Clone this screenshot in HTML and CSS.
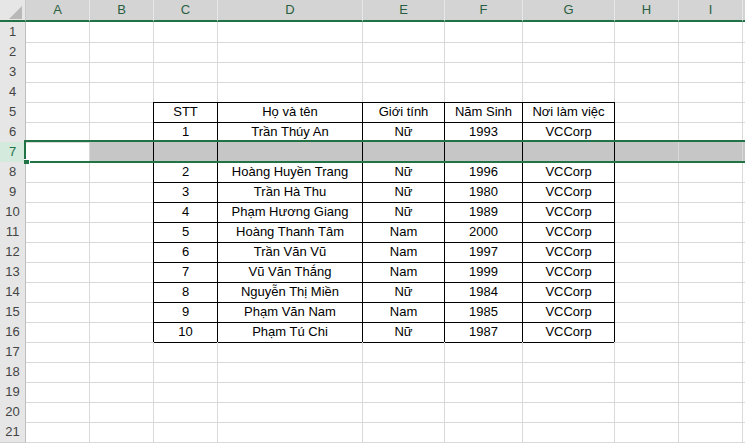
FILE: index.html
```html
<!DOCTYPE html>
<html>
<head>
<meta charset="utf-8">
<link rel="stylesheet" href="styles.css">
</head>
<body>
<div class="sheet">
  <div class="row head">
    <div class="corner"><svg class="tri" width="26" height="20" viewBox="0 0 26 20"><polygon points="9,19 22,6 22,19" fill="#b8b8b8"/></svg></div>
    <div class="ch">A</div><div class="ch">B</div><div class="ch">C</div><div class="ch">D</div><div class="ch">E</div><div class="ch">F</div><div class="ch">G</div><div class="ch">H</div><div class="ch">I</div><div class="ch"></div>
  </div>
  <div class="row"><div class="rh">1</div><div class="c"></div><div class="c"></div><div class="c"></div><div class="c"></div><div class="c"></div><div class="c"></div><div class="c"></div><div class="c"></div><div class="c"></div><div class="c"></div></div>
  <div class="row"><div class="rh">2</div><div class="c"></div><div class="c"></div><div class="c"></div><div class="c"></div><div class="c"></div><div class="c"></div><div class="c"></div><div class="c"></div><div class="c"></div><div class="c"></div></div>
  <div class="row"><div class="rh">3</div><div class="c"></div><div class="c"></div><div class="c"></div><div class="c"></div><div class="c"></div><div class="c"></div><div class="c"></div><div class="c"></div><div class="c"></div><div class="c"></div></div>
  <div class="row"><div class="rh">4</div><div class="c"></div><div class="c"></div><div class="c tt"></div><div class="c tt"></div><div class="c tt"></div><div class="c tt"></div><div class="c tt"></div><div class="c"></div><div class="c"></div><div class="c"></div></div>
  <div class="row"><div class="rh">5</div><div class="c"></div><div class="c tl"></div><div class="c t">STT</div><div class="c t">Họ và tên</div><div class="c t">Giới tính</div><div class="c t">Năm Sinh</div><div class="c t">Nơi làm việc</div><div class="c"></div><div class="c"></div><div class="c"></div></div>
  <div class="row"><div class="rh">6</div><div class="c"></div><div class="c tl"></div><div class="c t">1</div><div class="c t">Trần Thúy An</div><div class="c t">Nữ</div><div class="c t">1993</div><div class="c t">VCCorp</div><div class="c"></div><div class="c"></div><div class="c"></div></div>
  <div class="row"><div class="rh rh-sel">7</div><div class="c"></div><div class="c tl g"></div><div class="c t g"></div><div class="c t g"></div><div class="c t g"></div><div class="c t g"></div><div class="c t g"></div><div class="c g"></div><div class="c g"></div><div class="c g"></div></div>
  <div class="row"><div class="rh">8</div><div class="c"></div><div class="c tl"></div><div class="c t">2</div><div class="c t">Hoàng Huyền Trang</div><div class="c t">Nữ</div><div class="c t">1996</div><div class="c t">VCCorp</div><div class="c"></div><div class="c"></div><div class="c"></div></div>
  <div class="row"><div class="rh">9</div><div class="c"></div><div class="c tl"></div><div class="c t">3</div><div class="c t">Trần Hà Thu</div><div class="c t">Nữ</div><div class="c t">1980</div><div class="c t">VCCorp</div><div class="c"></div><div class="c"></div><div class="c"></div></div>
  <div class="row"><div class="rh">10</div><div class="c"></div><div class="c tl"></div><div class="c t">4</div><div class="c t">Phạm Hương Giang</div><div class="c t">Nữ</div><div class="c t">1989</div><div class="c t">VCCorp</div><div class="c"></div><div class="c"></div><div class="c"></div></div>
  <div class="row"><div class="rh">11</div><div class="c"></div><div class="c tl"></div><div class="c t">5</div><div class="c t">Hoàng Thanh Tâm</div><div class="c t">Nam</div><div class="c t">2000</div><div class="c t">VCCorp</div><div class="c"></div><div class="c"></div><div class="c"></div></div>
  <div class="row"><div class="rh">12</div><div class="c"></div><div class="c tl"></div><div class="c t">6</div><div class="c t">Trần Văn Vũ</div><div class="c t">Nam</div><div class="c t">1997</div><div class="c t">VCCorp</div><div class="c"></div><div class="c"></div><div class="c"></div></div>
  <div class="row"><div class="rh">13</div><div class="c"></div><div class="c tl"></div><div class="c t">7</div><div class="c t">Vũ Văn Thắng</div><div class="c t">Nam</div><div class="c t">1999</div><div class="c t">VCCorp</div><div class="c"></div><div class="c"></div><div class="c"></div></div>
  <div class="row"><div class="rh">14</div><div class="c"></div><div class="c tl"></div><div class="c t">8</div><div class="c t">Nguyễn Thị Miền</div><div class="c t">Nữ</div><div class="c t">1984</div><div class="c t">VCCorp</div><div class="c"></div><div class="c"></div><div class="c"></div></div>
  <div class="row"><div class="rh">15</div><div class="c"></div><div class="c tl"></div><div class="c t">9</div><div class="c t">Phạm Văn Nam</div><div class="c t">Nam</div><div class="c t">1985</div><div class="c t">VCCorp</div><div class="c"></div><div class="c"></div><div class="c"></div></div>
  <div class="row"><div class="rh">16</div><div class="c"></div><div class="c tl"></div><div class="c t">10</div><div class="c t">Phạm Tú Chi</div><div class="c t">Nữ</div><div class="c t">1987</div><div class="c t">VCCorp</div><div class="c"></div><div class="c"></div><div class="c"></div></div>
  <div class="row"><div class="rh">17</div><div class="c"></div><div class="c"></div><div class="c"></div><div class="c"></div><div class="c"></div><div class="c"></div><div class="c"></div><div class="c"></div><div class="c"></div><div class="c"></div></div>
  <div class="row"><div class="rh">18</div><div class="c"></div><div class="c"></div><div class="c"></div><div class="c"></div><div class="c"></div><div class="c"></div><div class="c"></div><div class="c"></div><div class="c"></div><div class="c"></div></div>
  <div class="row"><div class="rh">19</div><div class="c"></div><div class="c"></div><div class="c"></div><div class="c"></div><div class="c"></div><div class="c"></div><div class="c"></div><div class="c"></div><div class="c"></div><div class="c"></div></div>
  <div class="row"><div class="rh">20</div><div class="c"></div><div class="c"></div><div class="c"></div><div class="c"></div><div class="c"></div><div class="c"></div><div class="c"></div><div class="c"></div><div class="c"></div><div class="c"></div></div>
  <div class="row"><div class="rh">21</div><div class="c"></div><div class="c"></div><div class="c"></div><div class="c"></div><div class="c"></div><div class="c"></div><div class="c"></div><div class="c"></div><div class="c"></div><div class="c"></div></div>
  <div class="sel"></div>
  <div class="handle"></div>
</div>
</body>
</html>
```
FILE: styles.css
```css
html, body {
  margin: 0;
  padding: 0;
  background: #ffffff;
  overflow: hidden;
}
body {
  width: 745px;
  height: 443px;
}
.sheet {
  position: relative;
  width: 745px;
  height: 443px;
  overflow: hidden;
  font-family: "Liberation Sans", Arial, sans-serif;
  font-size: 13px;
  color: #000;
}
.row {
  display: grid;
  grid-template-columns: 26px 64px 64px 64px 145px 82px 78px 92px 64px 64px 64px;
  height: 20px;
}
.row.head {
  height: 22px;
}
.corner {
  box-sizing: border-box;
  background: #e6e6e6;
  border-right: 1px solid #c8c8c8;
  border-bottom: 2px solid #217346;
  position: relative;
}
.tri {
  display: block;
}
.ch {
  box-sizing: border-box;
  background: #d4d4d4;
  border-right: 1px solid #e6e6e6;
  border-bottom: 2px solid #217346;
  color: #2a5e40;
  text-align: center;
  line-height: 20px;
  font-size: 13px;
}
.rh {
  box-sizing: border-box;
  background: #e6e6e6;
  border-right: 1px solid #bfbfbf;
  border-bottom: 1px solid #d0d0d0;
  color: #444444;
  text-align: center;
  line-height: 20px;
  font-size: 13px;
}
.rh-sel {
  background: #d3eadc;
  color: #217346;
}
.c {
  box-sizing: border-box;
  border-right: 1px solid #d9d9d9;
  border-bottom: 1px solid #d9d9d9;
  text-align: center;
  line-height: 20px;
  white-space: nowrap;
  overflow: hidden;
}
.c.t {
  border-right: 1px solid #000;
  border-bottom: 1px solid #000;
}
.c.tl {
  border-right: 1px solid #000;
}
.c.tt {
  border-bottom: 1px solid #000;
}
.c.g {
  background: #c6c6c6;
}
.sel {
  position: absolute;
  left: 24px;
  top: 140px;
  width: 800px;
  height: 23px;
  box-sizing: border-box;
  border: 2px solid #217346;
  pointer-events: none;
}
.handle {
  position: absolute;
  left: 24px;
  top: 159px;
  width: 6px;
  height: 5px;
  background: #217346;
  box-sizing: border-box;
  border-right: 1px solid #fff;
  border-top: 1px solid #fff;
}
```
